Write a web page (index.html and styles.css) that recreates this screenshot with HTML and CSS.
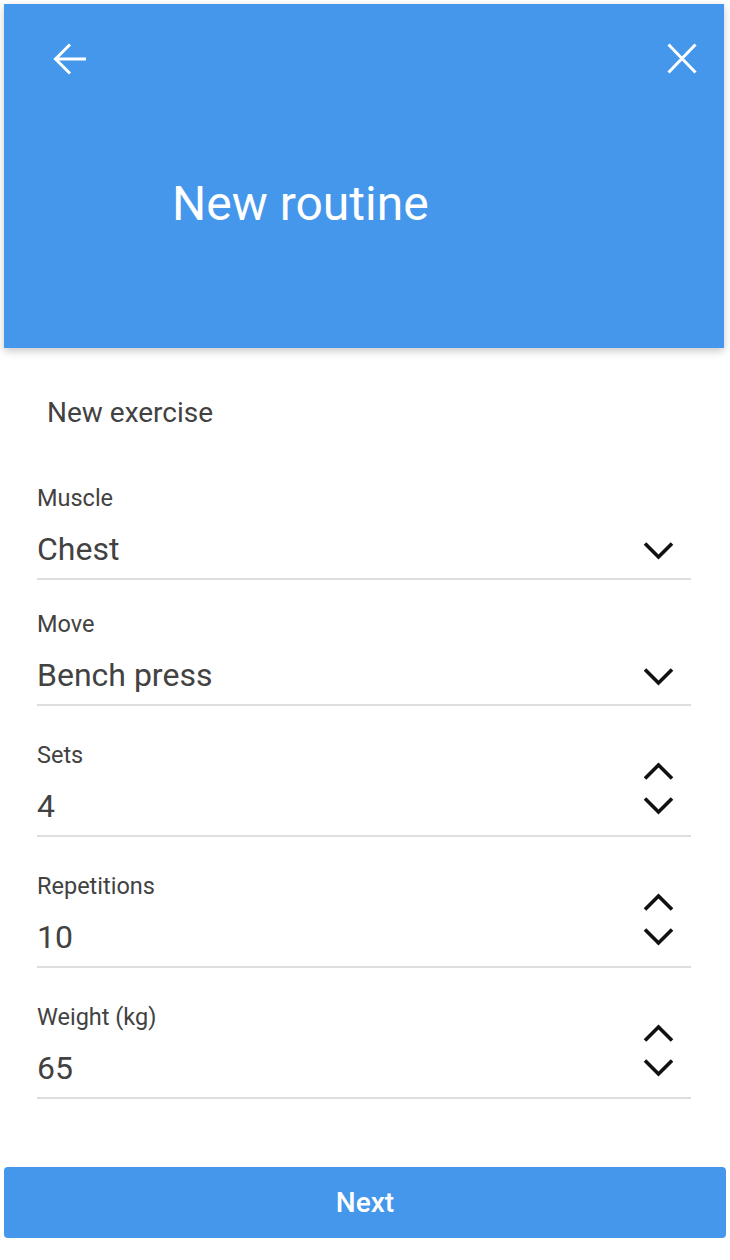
FILE: index.html
```html
<!DOCTYPE html>
<html lang="en">
<head>
<meta charset="utf-8">
<title>New routine</title>
<link rel="stylesheet" href="styles.css">
</head>
<body>
<div class="page">
  <header class="header">
    <div class="header-bar">
      <svg class="icon-back" width="35" height="34" viewBox="0 0 35 34" aria-label="Back">
        <path d="M33 17H3M17 2.5L2.5 17L17 31.5" fill="none" stroke="#fff" stroke-width="3"/>
      </svg>
      <svg class="icon-close" width="36" height="34" viewBox="0 0 36 34" aria-label="Close">
        <path d="M4.5 2.5L31.5 30.5M31.5 2.5L4.5 30.5" fill="none" stroke="#fff" stroke-width="3"/>
      </svg>
    </div>
    <h1 class="title">New routine</h1>
  </header>

  <main class="form">
    <h2 class="section-title">New exercise</h2>

    <div class="field field-select">
      <div class="field-main">
        <div class="label">Muscle</div>
        <div class="value">Chest</div>
      </div>
      <svg class="chev" width="32" height="20" viewBox="0 0 32 20"><polyline points="2,2.5 15.5,16 29,2.5" fill="none" stroke="#111" stroke-width="3.6"/></svg>
    </div>

    <div class="field field-select">
      <div class="field-main">
        <div class="label">Move</div>
        <div class="value">Bench press</div>
      </div>
      <svg class="chev" width="32" height="20" viewBox="0 0 32 20"><polyline points="2,2.5 15.5,16 29,2.5" fill="none" stroke="#111" stroke-width="3.6"/></svg>
    </div>

    <div class="field field-number">
      <div class="field-main">
        <div class="label">Sets</div>
        <div class="value">4</div>
      </div>
      <div class="spinner">
        <svg class="chev" width="32" height="20" viewBox="0 0 32 20"><polyline points="2,17.5 15.5,4 29,17.5" fill="none" stroke="#111" stroke-width="3.6"/></svg>
        <svg class="chev" width="32" height="20" viewBox="0 0 32 20"><polyline points="2,2.5 15.5,16 29,2.5" fill="none" stroke="#111" stroke-width="3.6"/></svg>
      </div>
    </div>

    <div class="field field-number">
      <div class="field-main">
        <div class="label">Repetitions</div>
        <div class="value">10</div>
      </div>
      <div class="spinner">
        <svg class="chev" width="32" height="20" viewBox="0 0 32 20"><polyline points="2,17.5 15.5,4 29,17.5" fill="none" stroke="#111" stroke-width="3.6"/></svg>
        <svg class="chev" width="32" height="20" viewBox="0 0 32 20"><polyline points="2,2.5 15.5,16 29,2.5" fill="none" stroke="#111" stroke-width="3.6"/></svg>
      </div>
    </div>

    <div class="field field-number">
      <div class="field-main">
        <div class="label">Weight (kg)</div>
        <div class="value">65</div>
      </div>
      <div class="spinner">
        <svg class="chev" width="32" height="20" viewBox="0 0 32 20"><polyline points="2,17.5 15.5,4 29,17.5" fill="none" stroke="#111" stroke-width="3.6"/></svg>
        <svg class="chev" width="32" height="20" viewBox="0 0 32 20"><polyline points="2,2.5 15.5,16 29,2.5" fill="none" stroke="#111" stroke-width="3.6"/></svg>
      </div>
    </div>
  </main>

  <button class="next-btn" type="button">Next</button>
</div>
</body>
</html>
```

FILE: styles.css
```css
* {
  box-sizing: border-box;
}

html, body {
  margin: 0;
  padding: 0;
  background: #ffffff;
}

body {
  font-family: Roboto, "Liberation Sans", Arial, sans-serif;
  color: #424242;
}

.page {
  display: flex;
  flex-direction: column;
  padding-top: 4px;
}

.header {
  margin: 0 6px 0 4px;
  height: 344px;
  background: #4497ea;
  box-shadow: 0 3px 8px rgba(0, 0, 0, 0.22);
  padding: 38px 24px 0 49px;
  display: flex;
  flex-direction: column;
}

.header-bar {
  display: flex;
  justify-content: space-between;
  align-items: flex-start;
  height: 34px;
}

.header-bar svg {
  display: block;
}

.title {
  margin: 100px 0 0 119px;
  font-size: 48px;
  line-height: 56px;
  font-weight: 400;
  color: #ffffff;
}

.form {
  padding: 49px 39px 0 37px;
  display: flex;
  flex-direction: column;
}

.section-title {
  margin: 0 0 0 10px;
  font-size: 28px;
  line-height: 32px;
  font-weight: 400;
  color: #424242;
}

.field {
  display: flex;
  align-items: flex-end;
  border-bottom: 2px solid #dedede;
  padding-bottom: 11px;
}

.section-title + .field {
  margin-top: 56px;
}

.field-select + .field-select {
  margin-top: 31px;
}

.field-number {
  margin-top: 36px;
}

.field-main {
  flex: 1;
  display: flex;
  flex-direction: column;
  gap: 20px;
}

.label {
  font-size: 23.5px;
  line-height: 26px;
}

.value {
  font-size: 32px;
  line-height: 36px;
}

.chev {
  display: block;
}

.field-select .chev {
  margin: 0 16px 6px 0;
}

.spinner {
  align-self: center;
  display: flex;
  flex-direction: column;
  gap: 15px;
  margin: 11px 16px 0 0;
}

.next-btn {
  margin: 68px 4px 0 4px;
  height: 71px;
  border: none;
  border-radius: 4px;
  background: #4497ea;
  color: #ffffff;
  font-family: "Roboto Medium", Roboto, "Liberation Sans", Arial, sans-serif;
  font-size: 28px;
  font-weight: 500;
  padding: 0;
}
```
